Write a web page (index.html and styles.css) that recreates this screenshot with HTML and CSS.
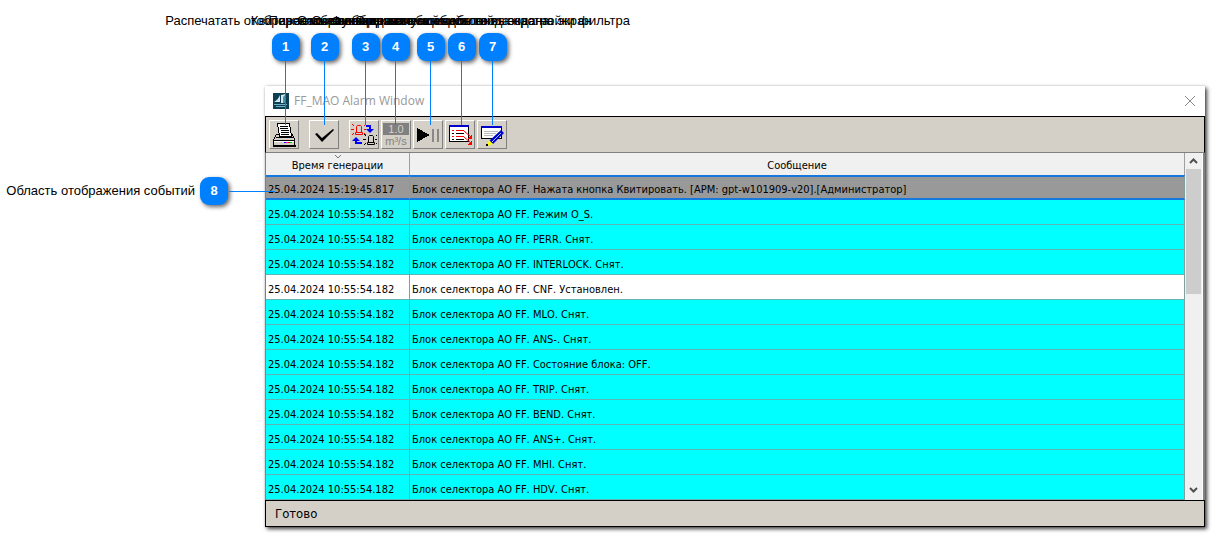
FILE: index.html
```html
<!DOCTYPE html>
<html lang="ru">
<head>
<meta charset="utf-8">
<title>FF_MAO Alarm Window</title>
<link rel="stylesheet" href="styles.css">
</head>
<body>
<main class="figure">
  <div class="side">
    <span>Область отображения событий</span><span class="badge">8</span>
  </div>
  <section class="window">
    <header class="titlebar">
      <svg class="logo" width="16" height="16" viewBox="0 0 16 16"><rect width="16" height="16" fill="#0d3f52"/><path d="M1 9Q5 7 7 2v7z" fill="#d5e8ef"/><path d="M8 2l5-1v9H8z" fill="#d5e8ef"/><path d="M10 4l3-3v9h-3z" fill="#4d91a8"/><path d="M1 11h13v1H1zM3 13h9v1H3z" fill="#6fb0c4"/></svg>
      <h1 class="title">FF_MAO Alarm Window</h1>
      <button class="close" aria-label="Закрыть"><svg width="12" height="12" viewBox="0 0 12 12"><path d="M1 1l10 10M11 1L1 11" stroke="#888" fill="none"/></svg></button>
    </header>
    <div class="toolbar">
      <button class="tool spaced" aria-label="Печать"><svg width="26" height="26" viewBox="0 0 26 26" shape-rendering="crispEdges">
        <path d="M5.500 12.500h16l2 5v6h-21v-6z" fill="#d4d0c8" stroke="#000"/>
        <path d="M6.500 1.500h12l2 13h-12z" fill="#fff" stroke="#000"/>
        <path d="M9 4.500h8M9 6.500h8M10 8.500h8M10 10.500h8M10 12.500h8" stroke="#000"/>
        <path d="M5 15.500h17M2 18.500h22" stroke="#000"/><path d="M3 19.500h20" stroke="#fff"/>
        <path d="M13 20h2v1h-2z" fill="#00f"/><path d="M15 20h2v1h-2z" fill="#f0f"/><path d="M17 20h2v1h-2z" fill="red"/><path d="M19 20h2v1h-2z" fill="#0c0"/>
        <path d="M2 23h23v2H2z" fill="#000"/></svg></button>
      <button class="tool spaced" aria-label="Квитировать"><svg width="26" height="26" viewBox="0 0 26 26"><path d="M4 12l2-1 5 5L22 7l1 1-12 12z" fill="#000"/></svg></button>
      <button class="tool" aria-label="Переключить сигнал"><svg width="26" height="26" viewBox="0 0 26 26">
        <g fill="none" stroke="red"><path d="M5.500 10V4.500l1-1h3l1 1V10M4.500 10.500h7v2h-7z"/><path d="M3 4L1 2M13 4l2-2M0 7.500h3M13 7.500h2M3 11l-2 2M13 11l2 2"/></g>
        <g fill="none" stroke="#000"><path d="M17.500 20v-5.500l1-1h3l1 1V20M16.500 20.500h7v2h-7z"/><path d="M15 14l-2-2M25 14l1-1M12 17.500h3M24 17.500h2M15 21l-2 2M25 21l1 1"/></g>
        <path d="M15 3h5v4h3l-4 4-4-4h3V5h-3z" fill="#00f"/><path d="M11 22H4v-3H1l4-4 4 4H6v1h5z" fill="#00f"/></svg></button>
      <button class="tool" aria-label="Значение, м³/с"><span class="unit"><span class="value">1.0</span><span>m³/s</span></span></button>
      <button class="tool" aria-label="Пауза"><svg width="26" height="26" viewBox="0 0 26 26" shape-rendering="crispEdges"><path d="M2 6l13 7-13 7z" fill="#000"/><path d="M17 7h2v13h-2zM22 7h2v13h-2z" fill="#888"/></svg></button>
      <button class="tool" aria-label="Переход"><svg width="26" height="26" viewBox="0 0 26 26" shape-rendering="crispEdges">
        <path d="M2.500 4.500h19v15h-19z" fill="#fff" stroke="#000"/><path d="M2 3h20v2H2z" fill="#00c"/>
        <path d="M5 8.500h2M9 8.500h8M5 14.500h2M9 14.500h8" stroke="red"/><path d="M5 11.500h2M9 11.500h8M5 17.500h2M9 17.500h8" stroke="#000"/><path d="M17 9l7 6M17 15l7 6" stroke="red" fill="none" shape-rendering="auto"/>
        <path d="M25 12v5h-5zM25 18v5h-5z" fill="red"/></svg></button>
      <button class="tool" aria-label="Фильтр"><svg width="26" height="26" viewBox="0 0 26 26" shape-rendering="crispEdges">
        <path d="M2.500 4.500h20v12h-20z" fill="#fff" stroke="#000"/><path d="M2 4h21v2H2z" fill="#00c"/><path d="M5 9.500h14M5 11.500h12M5 13.500h9" stroke="#bbb"/>
        <g shape-rendering="auto"><path d="M22 8l3 3-11 11-4-3z" fill="#00c"/><path d="M22 11L13 20" stroke="#8cf"/><path d="M10 18l4 4-6 2z" fill="#ff0"/></g><path d="M7 22h2v2H7z" fill="#000"/></svg></button>
    </div>
    <div class="list">
      <table class="events">
        <thead><tr><th class="time"><svg class="sort" width="8" height="5" viewBox="0 0 8 5"><path d="M1 1l3 3 3-3" stroke="#777" fill="none"/></svg>Время генерации</th><th>Сообщение</th></tr></thead>
        <tbody>
          <tr class="selected"><td>25.04.2024 15:19:45.817</td><td>Блок селектора АО FF. Нажата кнопка Квитировать. [АРМ: gpt-w101909-v20].[Администратор]</td></tr>
          <tr><td>25.04.2024 10:55:54.182</td><td>Блок селектора АО FF. Режим O_S.</td></tr>
          <tr><td>25.04.2024 10:55:54.182</td><td>Блок селектора АО FF. PERR. Снят.</td></tr>
          <tr><td>25.04.2024 10:55:54.182</td><td>Блок селектора АО FF. INTERLOCK. Снят.</td></tr>
          <tr class="plain"><td>25.04.2024 10:55:54.182</td><td>Блок селектора АО FF. CNF. Установлен.</td></tr>
          <tr><td>25.04.2024 10:55:54.182</td><td>Блок селектора АО FF. MLO. Снят.</td></tr>
          <tr><td>25.04.2024 10:55:54.182</td><td>Блок селектора АО FF. ANS-. Снят.</td></tr>
          <tr><td>25.04.2024 10:55:54.182</td><td>Блок селектора АО FF. Состояние блока: OFF.</td></tr>
          <tr><td>25.04.2024 10:55:54.182</td><td>Блок селектора АО FF. TRIP. Снят.</td></tr>
          <tr><td>25.04.2024 10:55:54.182</td><td>Блок селектора АО FF. BEND. Снят.</td></tr>
          <tr><td>25.04.2024 10:55:54.182</td><td>Блок селектора АО FF. ANS+. Снят.</td></tr>
          <tr><td>25.04.2024 10:55:54.182</td><td>Блок селектора АО FF. MHI. Снят.</td></tr>
          <tr><td>25.04.2024 10:55:54.182</td><td>Блок селектора АО FF. HDV. Снят.</td></tr>
        </tbody>
      </table>
      <div class="scrollbar">
        <button class="arrow" aria-label="Вверх"><svg width="9" height="7" viewBox="0 0 9 7"><path d="M1 5l3.500-3.500L8 5" stroke="#505050" stroke-width="2" fill="none"/></svg></button>
        <div class="thumb"></div>
        <button class="arrow" aria-label="Вниз"><svg width="9" height="7" viewBox="0 0 9 7"><path d="M1 1l3.500 3.500L8 1" stroke="#505050" stroke-width="2" fill="none"/></svg></button>
      </div>
    </div>
    <footer class="status">Готово</footer>
  </section>

  <div class="note note1"><span>Распечатать отображаемые сообщения</span><span class="badge">1</span></div>
  <div class="note note2"><span>Квитировать сообщения</span><span class="badge">2</span></div>
  <div class="note note3"><span>Переключение вида сообщений</span><span class="badge">3</span></div>
  <div class="note note4"><span>Отображение значений событий</span><span class="badge">4</span></div>
  <div class="note note5"><span>Остановка и запуск обновления экрана</span><span class="badge">5</span></div>
  <div class="note note6"><span>Функция автоматического вывода на экран</span><span class="badge">6</span></div>
  <div class="note note7"><span>Открытие окна для ввода настройки фильтра</span><span class="badge">7</span></div>
  <div class="pointer"></div>
</main>
</body>
</html>
```
FILE: styles.css
```css
* { box-sizing: border-box; }
body { margin: 0; background: #fff; color: #000; font: 13px/16px "Liberation Sans", Arial, sans-serif; }
button { padding: 0; border: 0; background: none; font: inherit; }
svg { display: block; }
.figure { position: relative; display: grid; grid-template-columns: 265px minmax(0, 1fr); padding: 86px 10px 8px 0; }
.side { display: flex; align-items: center; justify-content: flex-end; gap: 5px; align-self: start; padding: 91px 37px 0 0; white-space: nowrap; }
.badge { flex: none; width: 28px; height: 28px; border-radius: 9px; background: #0080ff; color: #fff; font-weight: bold; line-height: 28px; text-align: center; box-shadow: 2px 2px 4px rgba(0, 0, 0, .6); }

.note { position: absolute; top: 13px; display: flex; flex-direction: column; align-items: center; gap: 4px; width: 1px; white-space: nowrap; }
.note::after { content: ""; width: 1px; height: 64px; margin-top: -4px; background: #0080ff; }
.note1 { left: 285px; }
.note2 { left: 324px; }
.note3 { left: 365px; }
.note4 { left: 395px; }
.note5 { left: 430px; }
.note6 { left: 461px; }
.note7 { left: 492px; }
.pointer { position: absolute; left: 229px; top: 191px; width: 46px; height: 1px; background: #0080ff; }

.window { background: #fff; box-shadow: 2px 2px 4px rgba(0, 0, 0, .75), 0 0 2px rgba(0, 0, 0, .15); }
.titlebar { display: flex; align-items: center; gap: 5px; height: 30px; padding: 0 9px 0 8px; }
.title { flex: 1; margin: 0; color: #999; font: 12px/16px "Open Sans", sans-serif; }
.toolbar { display: flex; align-items: center; gap: 2px; height: 37px; padding: 0 3px; border: 1px solid #000; border-bottom-color: #808080; background: #d4d0c8; }
.tool { display: grid; place-items: center; width: 30px; height: 29px; border: 1px solid; border-color: #fff #808080 #808080 #fff; background: #d4d0c8; }
.spaced { margin-right: 8px; }
.unit { display: grid; width: 26px; color: #808080; font: 11px/12px "Liberation Sans", Arial, sans-serif; text-align: center; }
.value { background: #808080; color: #d4d0c8; }

.list { display: flex; border-left: 1px solid #808080; border-right: 2px solid #808080; }
.events { flex: 1; table-layout: fixed; border-collapse: separate; border-spacing: 0; font: 11px/16px "DejaVu Sans Condensed", "DejaVu Sans", Tahoma, sans-serif; font-kerning: none; }
.events th { position: relative; height: 22px; padding: 3px 0 0; border-right: 1px solid #a0a0a0; background: #f0f0f0; font-weight: normal; line-height: 16px; }
.events .time { width: 144px; }
.sort { position: absolute; top: 1px; left: 68px; }
.events td { height: 25px; padding: 6px 2px 0; border-right: 1px solid #80a0a0; border-bottom: 1px solid #60b4b4; background: #0ff; white-space: nowrap; }
.events .plain td { background: #fff; }
.events .selected td { padding: 5px 2px 0; border-top: 2px solid #1478dc; border-bottom: 2px solid #1478dc; background: #999; }
.scrollbar { display: flex; flex-direction: column; width: 18px; padding: 0 1px; border-right: 1px solid #fff; background: #f0f0f0; }
.arrow { display: grid; place-items: center; height: 16px; }
.arrow:last-child { height: 20px; margin-top: auto; }
.thumb { height: 125px; background: #cdcdcd; }
.status { height: 27px; padding: 5px 9px; border: 1px solid #000; background: #d4d0c8; font: 13px/15px "DejaVu Sans Condensed", "DejaVu Sans", Tahoma, sans-serif; }
```
